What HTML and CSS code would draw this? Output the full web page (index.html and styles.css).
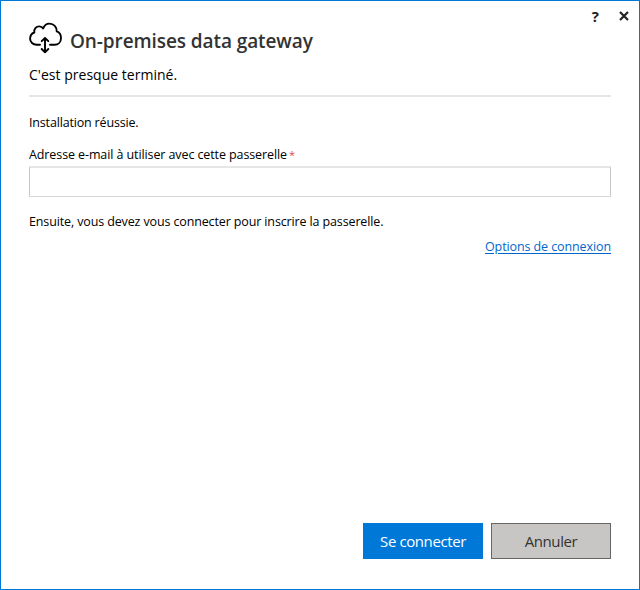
FILE: index.html
```html
<!DOCTYPE html>
<html lang="fr">
<head>
<meta charset="utf-8">
<title>On-premises data gateway</title>
<link rel="stylesheet" href="styles.css">
</head>
<body>
<main class="window">
  <div class="titlebar">
    <span class="help">?</span>
    <svg class="close" width="10" height="10" viewBox="0 0 10 10"><path d="M1 1 9 9M9 1 1 9"/></svg>
  </div>
  <header class="header">
    <svg class="logo" width="34" height="32" viewBox="0 0 34 32">
      <path d="M11 22.7H7.6C4 22.7 1.1 20.2 1.1 16.8C1.1 13.7 2.8 11.4 5.3 10.5C4.7 6.7 7.2 4.4 10.2 4.4C11.9 4.4 13.4 5 14.2 6.5C15.2 3.2 17.6 1.6 20.5 1.6C24.8 1.6 27.9 4.9 27.7 9.4C30.5 10.3 32 12.7 32 15.9C32 19.8 29.4 22.7 25.6 22.7H21"/>
      <path d="M16 16V30M12.7 19.2 16 15.9 19.3 19.2M12.7 27 16 30.3 19.3 27"/>
    </svg>
    <h1 class="title"><span>On-premises data gateway</span></h1>
  </header>
  <p class="subtitle"><span>C'est presque terminé.</span></p>
  <hr class="rule">
  <p class="text status"><span>Installation réussie.</span></p>
  <label class="text label" for="email"><span>Adresse e-mail à utiliser avec cette passerelle</span><b class="required">*</b></label>
  <input class="field" id="email" type="email">
  <p class="text next"><span>Ensuite, vous devez vous connecter pour inscrire la passerelle.</span></p>
  <a class="text options" href="#"><span>Options de connexion</span></a>
  <footer class="actions">
    <button class="button primary"><span>Se connecter</span></button>
    <button class="button"><span>Annuler</span></button>
  </footer>
</main>
</body>
</html>
```
FILE: styles.css
```css
* { box-sizing: border-box; }
body { margin: 0; background: #fff; font-family: "Open Sans", "Noto Sans", sans-serif; color: #000; }
p, h1 { margin: 0; }
.window { display: flex; flex-direction: column; height: 590px; padding: 0 28px; border: 1px solid #0078d7; }
.titlebar { display: flex; justify-content: flex-end; align-items: center; gap: 20px; height: 21px; padding-top: 9px; margin-right: -18px; color: #222; }
.help { font-size: 15px; font-weight: 700; line-height: 14px; }
.close { fill: none; stroke: #222; stroke-width: 2.2; }
.header { display: flex; height: 32px; gap: 7px; }
.logo { fill: none; stroke: #000; stroke-width: 1.9; stroke-linejoin: round; stroke-linecap: round; }
.title { margin-top: 3px; font-size: 19px; line-height: 32px; font-weight: 600; color: #333; white-space: nowrap; letter-spacing: -0.09px; }
.subtitle { margin-top: 10px; font-size: 14px; line-height: 22px; height: 22px; letter-spacing: 0.02px; }
.rule { width: 100%; height: 2px; margin: 9px 0 0; border: 0; background: #e6e6e6; }
.text { font-size: 12.5px; line-height: 18px; height: 18px; white-space: nowrap; letter-spacing: -0.1px; }
.status { margin-top: 17px; letter-spacing: -0.17px; }
.label { margin-top: 14px; }
.required { margin-left: 2px; color: #e84a4a; font-weight: 400; font-size: 11px; }
.field { width: 100%; height: 31px; margin-top: 2px; padding: 0 6px; border: 1px solid #c8c8c8; border-top: 2px solid #e6e6e6; border-bottom-color: #d8d8d8; border-radius: 0; background: #fff; font: inherit; outline: none; }
.next { margin-top: 16px; letter-spacing: -0.13px; }
.options { align-self: flex-end; margin-top: 7px; color: #0066cc; text-underline-offset: 2px; }
.actions { display: flex; justify-content: flex-end; gap: 8px; margin-top: auto; margin-bottom: 30px; }
.button { width: 120px; height: 36px; padding: 0; border: 1px solid #666; border-radius: 0; background: #c8c6c4; color: #333; font: 15px "Open Sans", "Noto Sans", sans-serif; letter-spacing: -0.4px; }
.primary { border-color: #0078d7; background: #0078d7; color: #fff; }
```
